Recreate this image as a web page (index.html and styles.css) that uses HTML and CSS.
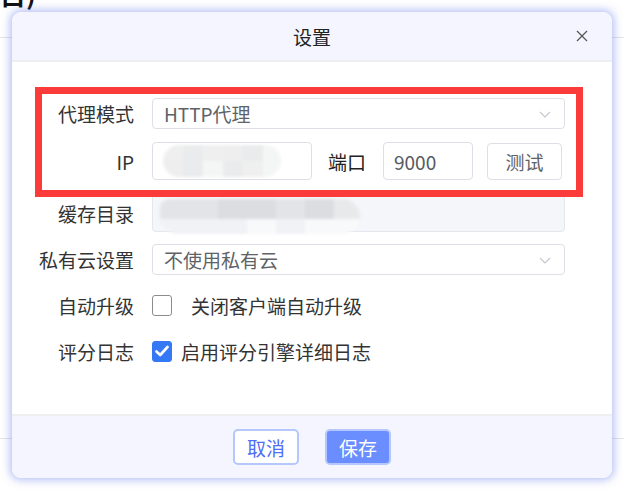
FILE: index.html
```html
<!DOCTYPE html>
<html lang="zh-CN">
<head>
<meta charset="utf-8">
<link rel="stylesheet" href="styles.css">
</head>
<body>
<div class="page">
  <div class="page-title">目)</div>
  <div class="page-card"></div>
</div>

<div class="dialog">
  <div class="dlg-header">
    <span class="dlg-title">设置</span>
    <button class="dlg-close" aria-label="close">
      <svg width="12" height="12" viewBox="0 0 12 12"><path d="M1 1 L11 11 M11 1 L1 11" stroke="#555" stroke-width="1.2" fill="none"/></svg>
    </button>
  </div>

  <div class="dlg-body">
    <div class="row row-select">
      <label class="lbl">代理模式</label>
      <div class="select"><span class="select-text">HTTP代理</span>
        <svg class="chev" width="12" height="7" viewBox="0 0 12 7"><path d="M1 1 L6 6 L11 1" stroke="#c3c6cd" stroke-width="1.1" fill="none"/></svg>
      </div>
    </div>

    <div class="row row-input">
      <label class="lbl">IP</label>
      <div class="input ip">
        <div class="blob blob-ip">
          <i class="c1"></i><i class="c2"></i><i class="c1"></i><i class="c3"></i><i class="c2"></i><i class="c4"></i>
          <i class="c3"></i><i class="c2"></i><i class="c4"></i><i class="c2"></i><i class="c1"></i><i class="c4"></i>
        </div>
      </div>
      <label class="lbl-port">端口</label>
      <div class="input port">9000</div>
      <button class="btn-test">测试</button>
    </div>

    <div class="row row-input">
      <label class="lbl">缓存目录</label>
      <div class="input disabled">
        <div class="blob blob-dir">
          <i class="d1"></i><i class="d1"></i><i class="d2"></i><i class="d2"></i><i class="d1"></i><i class="d2"></i><i class="d3"></i>
          <i class="d4"></i><i class="d4"></i><i class="d4"></i><i class="d5"></i><i class="d4"></i><i class="d5"></i><i class="d5"></i>
        </div>
      </div>
    </div>

    <div class="row row-select">
      <label class="lbl">私有云设置</label>
      <div class="select"><span class="select-text">不使用私有云</span>
        <svg class="chev" width="12" height="7" viewBox="0 0 12 7"><path d="M1 1 L6 6 L11 1" stroke="#c3c6cd" stroke-width="1.1" fill="none"/></svg>
      </div>
    </div>

    <div class="row row-check">
      <label class="lbl">自动升级</label>
      <span class="cb"></span>
      <span class="cb-text spaced">关闭客户端自动升级</span>
    </div>

    <div class="row row-check">
      <label class="lbl">评分日志</label>
      <span class="cb checked">
        <svg width="14" height="12" viewBox="0 0 14 12"><path d="M1.5 6.5 L5.2 10 L12.5 2" stroke="#fff" stroke-width="2.6" fill="none" stroke-linecap="round" stroke-linejoin="round"/></svg>
      </span>
      <span class="cb-text">启用评分引擎详细日志</span>
    </div>
  </div>

  <div class="dlg-footer">
    <button class="btn btn-cancel">取消</button>
    <button class="btn btn-primary">保存</button>
  </div>

  <div class="highlight"></div>
</div>
</body>
</html>
```

FILE: styles.css
```css
* { box-sizing: border-box; }

html, body {
  margin: 0;
  padding: 0;
  background: #ffffff;
  font-family: "Noto Sans CJK SC", "Noto Sans", sans-serif;
  color: #333;
}

body {
  width: 624px;
  height: 490px;
  overflow: hidden;
  position: relative;
}

.page {
  width: 624px;
  height: 490px;
}

.page-title {
  font-size: 26px;
  font-weight: 700;
  color: #111;
  line-height: 26px;
  margin-top: -19px;
}

.page-card {
  margin-top: 30px;
  height: 402px;
  border-top: 1px solid #e6e6e6;
  border-bottom: 1px solid #e6e6e6;
}

.dialog {
  position: absolute;
  left: 12px;
  top: 12px;
  width: 600px;
  height: 466px;
  background: #fff;
  border-radius: 9px;
  box-shadow: 0 0 9px 2px rgba(105, 125, 235, 0.5);
  display: flex;
  flex-direction: column;
}

.dlg-header {
  height: 50px;
  flex: none;
  background: #f4f5fe;
  border-bottom: 2px solid #efeff1;
  border-radius: 9px 9px 0 0;
  display: flex;
  align-items: center;
  justify-content: center;
  position: relative;
}

.dlg-title {
  font-size: 19px;
  color: #222;
  line-height: 1;
}

.dlg-close {
  position: absolute;
  right: 24px;
  top: 18px;
  width: 12px;
  height: 12px;
  padding: 0;
  border: 0;
  background: transparent;
  display: flex;
}

.dlg-body {
  flex: 1;
  padding: 36px 47px 0 33px;
}

.row {
  display: flex;
  align-items: center;
}

.row-select { height: 31px; }
.row-input { height: 38px; }
.row-check { height: 30px; }

.row:nth-child(1) { margin-bottom: 13px; }
.row:nth-child(2) { margin-bottom: 14px; }
.row:nth-child(3) { margin-bottom: 12px; }
.row:nth-child(4) { margin-bottom: 15px; }
.row:nth-child(5) { margin-bottom: 16px; }

.lbl {
  width: 107px;
  flex: none;
  display: flex;
  justify-content: flex-end;
  white-space: nowrap;
  padding-right: 18px;
  font-size: 19px;
  color: #333;
  line-height: 1;
}

.select {
  flex: 1;
  height: 31px;
  border: 1px solid #dcdfe6;
  border-radius: 4px;
  display: flex;
  align-items: center;
  justify-content: space-between;
  padding: 0 13px 0 11px;
  font-size: 19px;
  color: #606266;
}

.select-text { line-height: 1; }

.chev { margin-top: 2px; }

.input {
  height: 38px;
  border: 1px solid #dcdfe6;
  border-radius: 4px;
  background: #fff;
  display: flex;
  align-items: center;
  font-size: 19px;
  color: #56595f;
}

.input.ip {
  width: 160px;
  flex: none;
  padding-left: 10px;
}

.input.port {
  width: 90px;
  flex: none;
  padding-left: 10px;
}

.input.disabled {
  flex: 1;
  background: #f5f6f9;
  border-color: #e4e7ed;
  padding-left: 7px;
}

.lbl-port {
  font-size: 19px;
  color: #222;
  margin: 0 17px 0 16px;
  line-height: 1;
}

.btn-test {
  margin-left: 14px;
  width: 75px;
  height: 37px;
  border: 1px solid #dcdfe6;
  border-radius: 4px;
  background: #fff;
  font-family: inherit;
  font-size: 19px;
  color: #606266;
  padding: 0;
}

.blob {
  display: grid;
  filter: blur(1.6px);
  overflow: hidden;
}

.blob i { display: block; }

.blob-ip {
  grid-template-columns: repeat(6, 20px);
  grid-template-rows: 16px 16px;
  border-radius: 16px;
  width: 118px;
}

.c1 { background: #efefef; }
.c2 { background: #eaebec; }
.c3 { background: #edeeed; }
.c4 { background: #f4f5f5; }

.blob-dir {
  grid-template-columns: repeat(7, 29px);
  grid-template-rows: 20px 15px;
  border-radius: 10px 18px 18px 18px;
  width: 200px;
  margin-top: 6px;
}

.d1 { background: #e3e4e7; }
.d2 { background: #dcdde1; }
.d3 { background: #e8e9eb; }
.d4 { background: #f1f2f5; }
.d5 { background: #f8f9fa; }

.cb {
  width: 20px;
  height: 21px;
  flex: none;
  border: 1.5px solid #8c8c8c;
  border-radius: 3px;
  background: #fff;
  display: flex;
  align-items: center;
  justify-content: center;
}

.cb.checked {
  background: #3578f6;
  border-color: #3578f6;
}

.cb-text {
  font-size: 19px;
  color: #333;
  margin-left: 9px;
  line-height: 1;
}

.cb-text.spaced { margin-left: 19px; }

.dlg-footer {
  height: 64px;
  flex: none;
  background: #f4f5fe;
  border-top: 2px solid #efeff1;
  border-radius: 0 0 9px 9px;
  display: flex;
  align-items: center;
  justify-content: center;
  gap: 26px;
}

.btn {
  width: 66px;
  height: 36px;
  border: 2px solid #b6c7fd;
  border-radius: 5px;
  font-family: inherit;
  font-size: 19px;
  padding: 0;
  line-height: 1;
}

.btn-cancel {
  background: #fff;
  color: #4e6ef5;
}

.btn-primary {
  background: #6a8dff;
  color: #fff;
}

.highlight {
  position: absolute;
  left: 23px;
  top: 75px;
  width: 548px;
  height: 110px;
  border: 7px solid #fb3a3a;
  pointer-events: none;
}
```
